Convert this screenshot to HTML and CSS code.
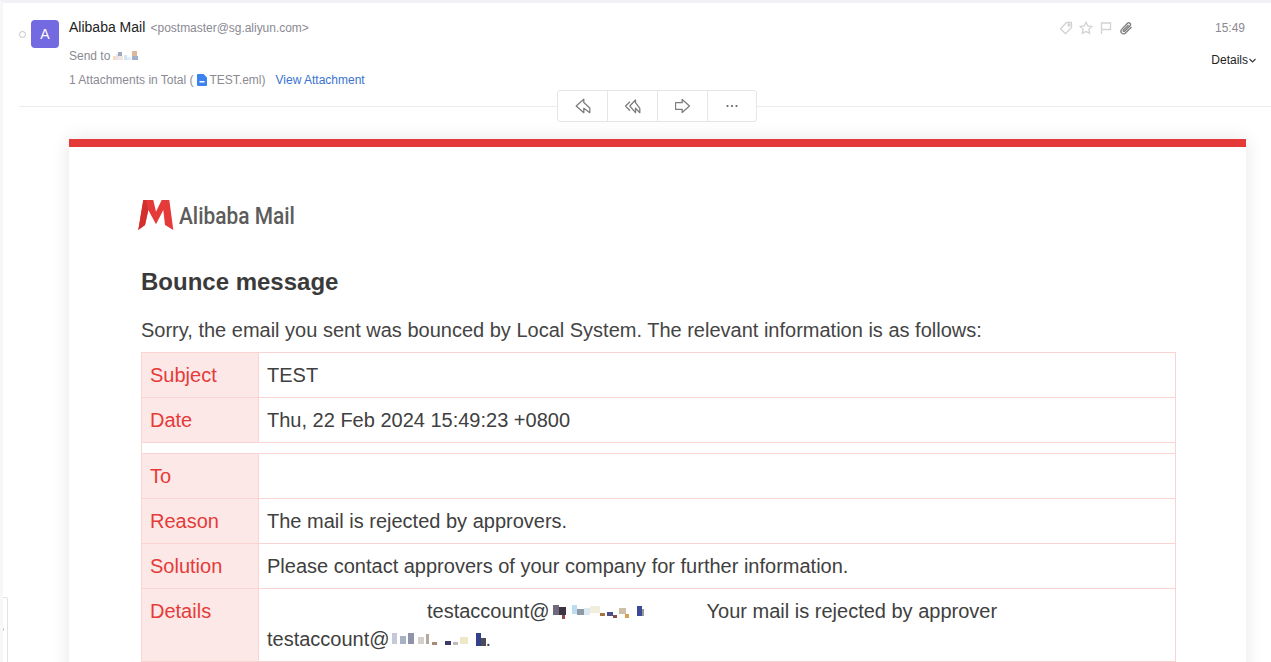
FILE: index.html
```html
<!DOCTYPE html>
<html lang="en">
<head>
<meta charset="utf-8">
<title>Bounce message</title>
<link rel="stylesheet" href="styles.css">
</head>
<body>
<div class="page">
  <header class="head">
    <div class="head-row">
      <span class="dot"></span>
      <span class="avatar">A</span>
      <div class="meta">
        <div class="from"><span class="name">Alibaba Mail</span> <span class="addr">&lt;postmaster@sg.aliyun.com&gt;</span></div>
        <div class="send">Send to<svg class="mosaic-send" width="28" height="12" viewBox="0 0 28 12"><rect x="1" y="6" width="3" height="4" fill="#fcd9bc"/><rect x="4" y="4" width="3" height="6" fill="#e4e6ee"/><rect x="6" y="2" width="4" height="4" fill="#a0a8c0"/><rect x="7" y="6" width="4" height="4" fill="#f4e6d8"/><rect x="12" y="5" width="3" height="5" fill="#cfe6f6"/><rect x="15" y="7" width="4" height="3" fill="#dfeef8"/><rect x="20" y="1" width="5" height="5" fill="#dcb898"/><rect x="20" y="6" width="6" height="4" fill="#9fb0cc"/></svg></div>
        <div class="attach"><span>1 Attachments in Total (</span><svg class="file" width="10" height="12" viewBox="0 0 10 12"><path d="M1 0h5.500L10 3.500V11a1 1 0 0 1-1 1H1a1 1 0 0 1-1-1V1a1 1 0 0 1 1-1z" fill="#3b82ee"/><rect x="2.500" y="7" width="5" height="1.500" fill="#fff"/></svg><span>TEST.eml)</span><a class="view" href="#">View Attachment</a></div>
      </div>
      <div class="side">
        <div class="side-top">
          <div class="marks">
            <svg width="14" height="14" viewBox="0 0 14 14" fill="none" stroke="#d2d2d2" stroke-width="1.300" stroke-linejoin="round"><path d="M7.500 1.500h5v5l-6 6.200-5-5z"/><circle cx="10" cy="4" r="1"/></svg>
            <svg width="14" height="14" viewBox="0 0 14 14" fill="none" stroke="#d2d2d2" stroke-width="1.300"><path d="M7 1.300l1.800 3.700 4 .6-2.900 2.800.7 4L7 10.500l-3.600 1.900.7-4L1.200 5.600l4-.6z"/></svg>
            <svg width="14" height="14" viewBox="0 0 14 14" fill="none" stroke="#d2d2d2" stroke-width="1.300"><path d="M2.500 13V2h9v6.500h-9"/></svg>
            <svg width="14" height="14" viewBox="0 0 14 14" fill="none" stroke="#7c7c7c" stroke-width="1.300"><path d="M12.500 6l-6 6a2.600 2.600 0 0 1-3.800-3.600L8.500 2.300a1.700 1.700 0 0 1 2.500 2.400L5.600 10.200a.8.800 0 0 1-1.200-1.100L9.500 4"/></svg>
          </div>
          <span class="time">15:49</span>
        </div>
        <div class="details">Details<svg width="7" height="5" viewBox="0 0 7 5" fill="none" stroke="#333" stroke-width="1.100"><path d="M.5 1l3 3 3-3"/></svg></div>
      </div>
    </div>
    <div class="rule">
      <div class="tools">
        <span class="tool"><svg width="18" height="16" viewBox="0 0 18 16" fill="none" stroke="#7d7d7d" stroke-width="1.300" stroke-linejoin="round"><path d="M2.200 8L9.800 1.300V4.500L15.800 10V14.700L9.800 10.300V14.700z"/></svg></span>
        <span class="tool"><svg width="18" height="16" viewBox="0 0 18 16" fill="none" stroke="#7d7d7d" stroke-width="1.300" stroke-linejoin="round"><path d="M5.800 8L11.500 2V4.700L15.800 10.300V14.700L11.500 10.300V14.700zM6 3.700L1.500 8 6 12.700"/></svg></span>
        <span class="tool"><svg width="16" height="14" viewBox="0 0 16 14" fill="none" stroke="#7d7d7d" stroke-width="1.300" stroke-linejoin="round"><path d="M.5 3.700H7.200V.5L14.500 7 7.200 13.500V10.300H.5z"/></svg></span>
        <span class="tool"><svg width="12" height="4" viewBox="0 0 12 4" fill="#666"><circle cx="1.500" cy="2" r="1.100"/><circle cx="6" cy="2" r="1.100"/><circle cx="10.500" cy="2" r="1.100"/></svg></span>
      </div>
    </div>
  </header>

  <main class="card">
    <div class="logo">
      <svg width="37" height="33" viewBox="0 0 37 33"><path d="M5.300 1L.3 31 7 26 10.300 11 18 25.300 25.300 11 27 26 35.300 31 31.300 1H23.700L18 12.700 15.300 1z" fill="#e53b38"/><path d="M5.300 1L.3 31 7 26 10.300 11 8 1z" fill="#d2302e"/></svg>
      <span class="logo-text">Alibaba Mail</span>
    </div>
    <h1>Bounce message</h1>
    <p class="intro">Sorry, the email you sent was bounced by Local System. The relevant information is as follows:</p>
    <table class="info">
      <tr><th>Subject</th><td>TEST</td></tr>
      <tr><th>Date</th><td>Thu, 22 Feb 2024 15:49:23 +0800</td></tr>
      <tr class="gap"><td colspan="2"></td></tr>
      <tr><th>To</th><td></td></tr>
      <tr><th>Reason</th><td>The mail is rejected by approvers.</td></tr>
      <tr><th>Solution</th><td>Please contact approvers of your company for further information.</td></tr>
      <tr class="tall"><th>Details</th><td><span class="blank-a"></span>testaccount@<svg class="mosaic mosaic-a" width="92" height="22" viewBox="0 0 92 22"><rect x="0" y="4" width="6" height="10" fill="#6e6a7c"/><rect x="6" y="6" width="7" height="8" fill="#3c3442"/><rect x="9" y="14" width="3" height="4" fill="#8c4a4a"/><rect x="19" y="4" width="5" height="9" fill="#bcdcf2"/><rect x="24" y="8" width="7" height="6" fill="#8f9aa8"/><rect x="31" y="7" width="6" height="7" fill="#dbe9f3"/><rect x="37" y="5" width="10" height="7" fill="#f2eedc"/><rect x="47" y="12" width="5" height="3" fill="#a8743c"/><rect x="54" y="11" width="6" height="4" fill="#4a4f8c"/><rect x="60" y="14" width="4" height="3" fill="#8c4a4a"/><rect x="66" y="7" width="7" height="6" fill="#cdbfa8"/><rect x="72" y="13" width="4" height="4" fill="#d8a050"/><rect x="84" y="5" width="5" height="10" fill="#3d4a96"/><rect x="89" y="8" width="2" height="7" fill="#9a9a9a"/></svg><span class="blank-b"></span>Your mail is rejected by approver<br>testaccount@<svg class="mosaic" width="96" height="22" viewBox="0 0 96 22"><rect x="2" y="4" width="5" height="11" fill="#c5c8d6"/><rect x="10" y="7" width="6" height="8" fill="#a8b0c4"/><rect x="18" y="4" width="6" height="11" fill="#8e93ac"/><rect x="28" y="8" width="6" height="7" fill="#d6d0ca"/><rect x="36" y="5" width="3" height="10" fill="#b4a89f"/><rect x="42" y="13" width="5" height="3" fill="#a58a78"/><rect x="55" y="12" width="6" height="4" fill="#3c3c66"/><rect x="63" y="13" width="5" height="3" fill="#bbb"/><rect x="70" y="8" width="8" height="7" fill="#eee8c8"/><rect x="86" y="4" width="5" height="13" fill="#34408c"/><rect x="91" y="9" width="5" height="8" fill="#4c4c58"/></svg>.</td></tr>
    </table>
  </main>
  <div class="handle"></div>
</div>
</body>
</html>
```
FILE: styles.css
```css
* { box-sizing: border-box; }
html, body { margin: 0; height: 662px; overflow: hidden; background: #fff; }
body { font-family: "Liberation Sans", Arial, sans-serif; color: #333; }
.page { position: relative; height: 662px; overflow: hidden; background: #fff; border-top: 3px solid #f2f2f6; border-left: 3px solid #f7f7fa; }
.head { padding: 0 0 0 16px; }
.head-row { display: flex; height: 100px; padding-top: 17px; }
.dot { width: 7px; height: 7px; margin-top: 11px; border: 1px solid #c4c4c4; border-radius: 50%; }
.avatar { width: 28px; height: 28px; margin-left: 5px; border-radius: 4px; background: #7369e0; color: #fff; font-size: 14px; display: flex; align-items: center; justify-content: center; }
.meta { margin-left: 10px; flex: 1; font-size: 12px; color: #8a8a92; }
.from { height: 15px; line-height: 15px; }
.name { font-size: 14px; color: #222; }
.addr { margin-left: 2px; letter-spacing: -.03px; }
.send { margin-top: 14px; height: 14px; line-height: 14px; display: flex; align-items: center; }
.mosaic-send { margin-left: 2px; }
.attach { margin-top: 10px; height: 14px; line-height: 14px; display: flex; align-items: center; }
.file { margin: 0 3px 0 3px; }
.view { margin-left: 10px; color: #3a73d0; text-decoration: none; }
.side { width: 212px; flex: none; padding-right: 15px; }
.side-top { display: flex; align-items: center; height: 16px; }
.marks { display: flex; gap: 6px; }
.time { margin-left: auto; margin-right: 11px; font-size: 12px; color: #8a8a92; }
.details { margin-top: 17px; font-size: 12px; color: #222; display: flex; align-items: center; justify-content: flex-end; gap: 1px; }
.rule { position: relative; margin-top: 3px; height: 1px; background: #ececec; }
.tools { position: absolute; left: 538px; top: -16px; display: flex; width: 200px; height: 32px; background: #fff; border: 1px solid #e6e6e6; border-radius: 3px; }
.tool { flex: none; width: 50px; display: flex; align-items: center; justify-content: center; border-right: 1px solid #e6e6e6; }
.tool:last-child { width: 48px; border-right: 0; }
.card { margin: 32px 0 0 66px; width: 1177px; height: 560px; border-top: 8px solid #e53b38; box-shadow: 0 0 18px rgba(0, 0, 0, .1); padding: 0 70px 0 72px; }
.logo { display: flex; align-items: center; margin: 52px 0 0 -3px; height: 33px; }
.logo-text { margin-left: 4px; font-family: Roboto, "Liberation Sans", sans-serif; font-size: 24px; font-weight: 500; color: #5c5c5c; white-space: nowrap; transform: scaleX(.87); transform-origin: left; }
h1 { margin: 0; padding-top: 36px; font-size: 24px; line-height: 28px; font-weight: 700; color: #3a3a3a; }
.intro { margin: 20px 0 0; font-size: 20px; line-height: 28px; color: #444; }
.info { width: 1035px; margin-top: 8px; border-collapse: collapse; table-layout: fixed; font-size: 20px; }
.info th, .info td { border: 1px solid #fad4d2; height: 45px; padding: 0 8px; text-align: left; line-height: 28px; font-weight: 400; }
.info th { width: 117px; background: #fde8e8; color: #e53b38; }
.info td { color: #404040; }
.info .gap td { height: 11px; padding: 0; line-height: 0; }
.info .tall th, .info .tall td { height: 73px; padding-top: 8px; padding-bottom: 8px; vertical-align: top; }
.blank-a { display: inline-block; width: 160px; }
.blank-b { display: inline-block; width: 62px; }
.mosaic { vertical-align: -5px; }
.mosaic-a { margin-left: 3px; }
.handle { position: absolute; left: -3px; top: 594px; width: 8px; height: 66px; border: 1px solid #e2e2e2; border-left: 0; border-radius: 0 2px 2px 0; background: #fff; }
.handle::after { content: ""; position: absolute; left: 1px; top: 30px; width: 3px; height: 3px; border-radius: 50%; background: #bbb; }
```
